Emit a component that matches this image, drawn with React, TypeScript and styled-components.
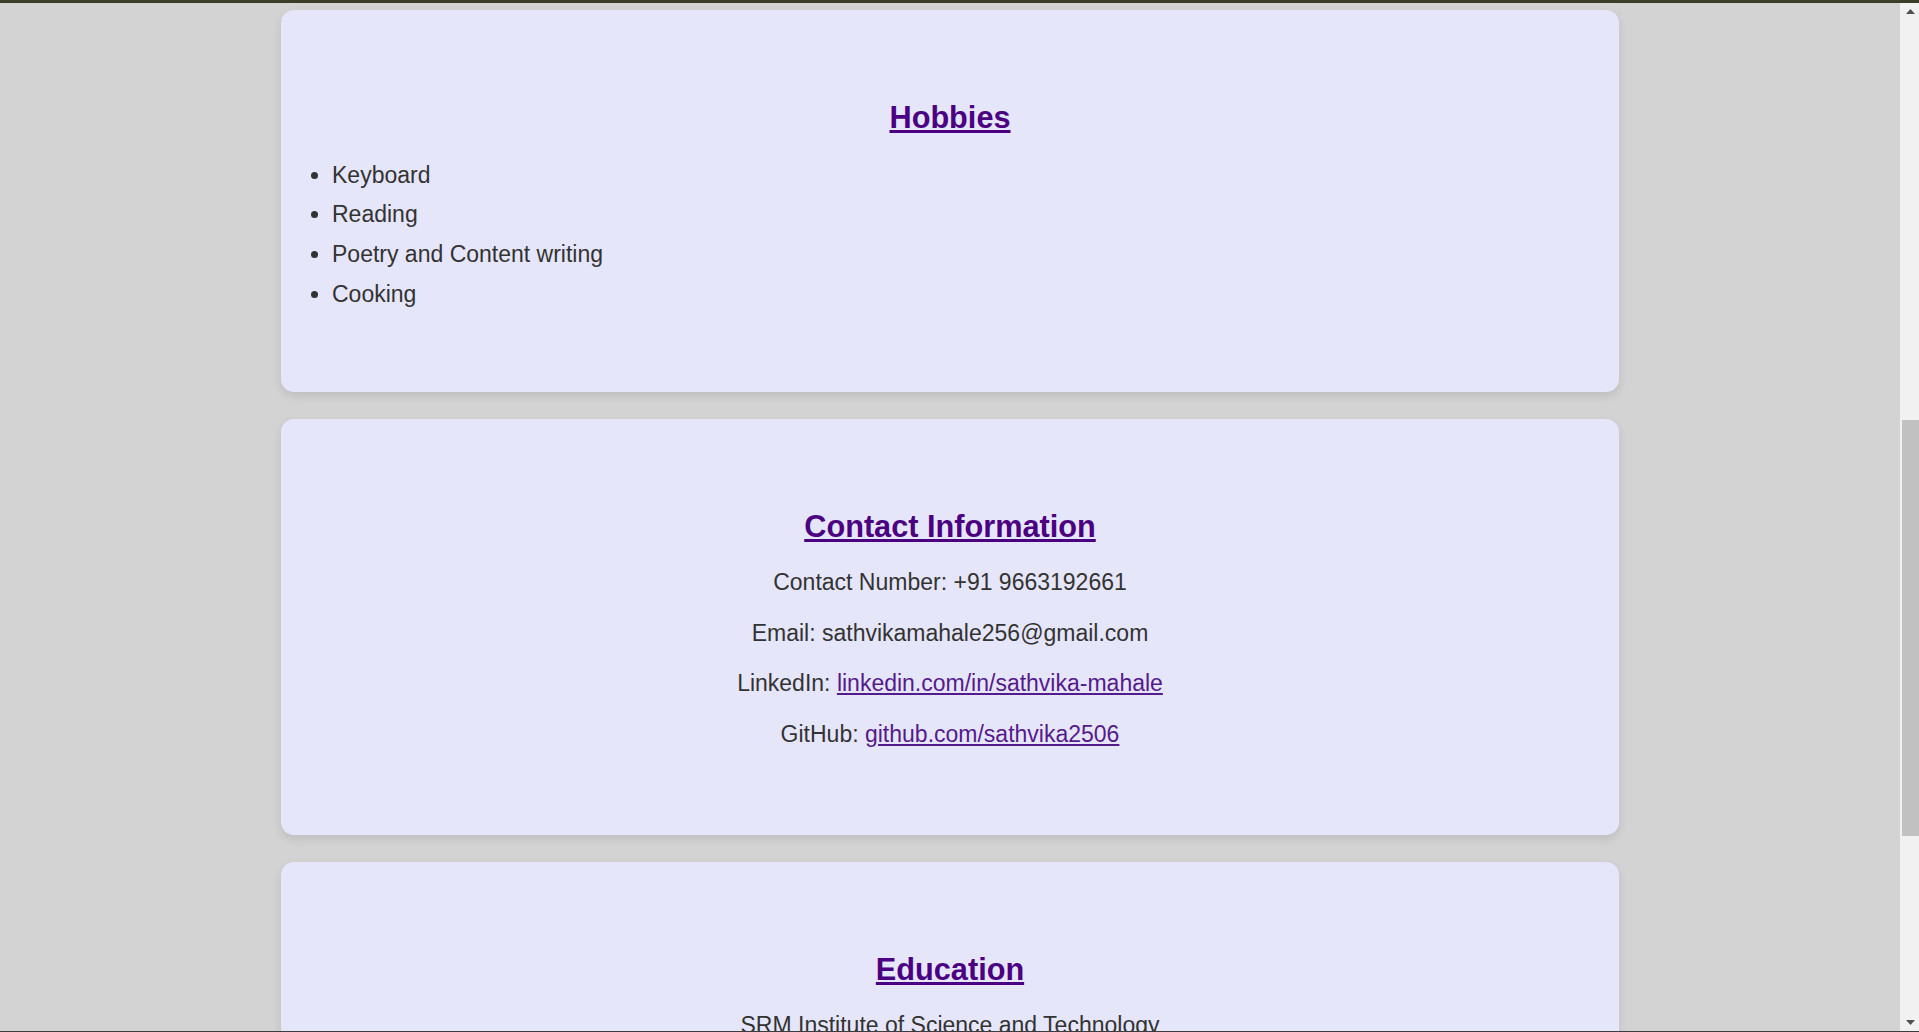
import React from "react";
import styled, { createGlobalStyle } from "styled-components";

const GlobalStyle = createGlobalStyle`
  html, body {
    margin: 0;
    padding: 0;
    height: 100%;
    overflow: hidden;
  }
  body {
    background: #d3d3d3;
    font-family: "Liberation Sans", Arial, sans-serif;
    color: #333333;
  }
`;

const Frame = styled.div`
  height: 100vh;
  display: flex;
  flex-direction: column;
`;

const TopEdge = styled.div`
  height: 3px;
  flex-shrink: 0;
  background: #3b3e2b;
`;

const BottomEdge = styled.div`
  height: 1px;
  flex-shrink: 0;
  background: #3c3c3c;
`;

const Window = styled.div`
  flex: 1;
  min-height: 0;
  display: flex;
`;

const Viewport = styled.main`
  flex: 1;
  min-width: 0;
  overflow: hidden;
  padding-top: 7px;
  display: flex;
  flex-direction: column;
  align-items: center;
  gap: 27px;
`;

const Card = styled.section`
  width: 1338px;
  flex-shrink: 0;
  box-sizing: border-box;
  padding: 64px 0;
  background: #e6e6fa;
  border-radius: 13px;
  box-shadow: 0 4px 10px rgba(0, 0, 0, 0.1);
`;

const Heading = styled.h2`
  margin: 25.5px 0;
  font-size: 30.7px;
  line-height: 35px;
  font-weight: 700;
  color: #4b0082;
  text-align: center;
  text-decoration: underline;
`;

const List = styled.ul`
  margin: 27px 0 21px;
  padding-left: 51px;
  text-align: left;
`;

const Item = styled.li`
  font-size: 23px;
  line-height: 26.5px;
  margin: 13.3px 0;
`;

const Line = styled.p`
  margin: 23px 0;
  font-size: 23px;
  line-height: 27.5px;
  text-align: center;
`;

const Link = styled.a`
  color: #551a8b;
  text-decoration: underline;
`;

const ScrollBar = styled.div`
  width: 19px;
  flex-shrink: 0;
  background: #f1f1f1;
  display: flex;
  flex-direction: column;
`;

const ArrowButton = styled.div`
  height: 17px;
  flex-shrink: 0;
  display: flex;
  align-items: center;
  justify-content: center;
  padding-left: 2px;
`;

const Track = styled.div`
  flex: 1;
  display: flex;
  flex-direction: column;
`;

const Thumb = styled.div`
  margin: 400px 0 0 2px;
  height: 416px;
  background: #c1c1c1;
`;

const Arrow = ({ up }: { up?: boolean }) => (
  <svg width="9" height="5" viewBox="0 0 9 5">
    <polygon points={up ? "0,5 4.5,0 9,5" : "0,0 4.5,5 9,0"} fill="#505050" />
  </svg>
);

const hobbies = ["Keyboard", "Reading", "Poetry and Content writing", "Cooking"];

export default function App() {
  return (
    <>
      <GlobalStyle />
      <Frame>
        <TopEdge />
        <Window>
          <Viewport>
            <Card>
              <Heading>Hobbies</Heading>
              <List>
                {hobbies.map((h) => (
                  <Item key={h}>{h}</Item>
                ))}
              </List>
            </Card>
            <Card>
              <Heading>Contact Information</Heading>
              <Line>Contact Number: +91 9663192661</Line>
              <Line>Email: sathvikamahale256@gmail.com</Line>
              <Line>
                LinkedIn: <Link href="#">linkedin.com/in/sathvika-mahale</Link>
              </Line>
              <Line>
                GitHub: <Link href="#">github.com/sathvika2506</Link>
              </Line>
            </Card>
            <Card>
              <Heading>Education</Heading>
              <Line>SRM Institute of Science and Technology</Line>
            </Card>
          </Viewport>
          <ScrollBar>
            <ArrowButton>
              <Arrow up />
            </ArrowButton>
            <Track>
              <Thumb />
            </Track>
            <ArrowButton>
              <Arrow />
            </ArrowButton>
          </ScrollBar>
        </Window>
        <BottomEdge />
      </Frame>
    </>
  );
}
